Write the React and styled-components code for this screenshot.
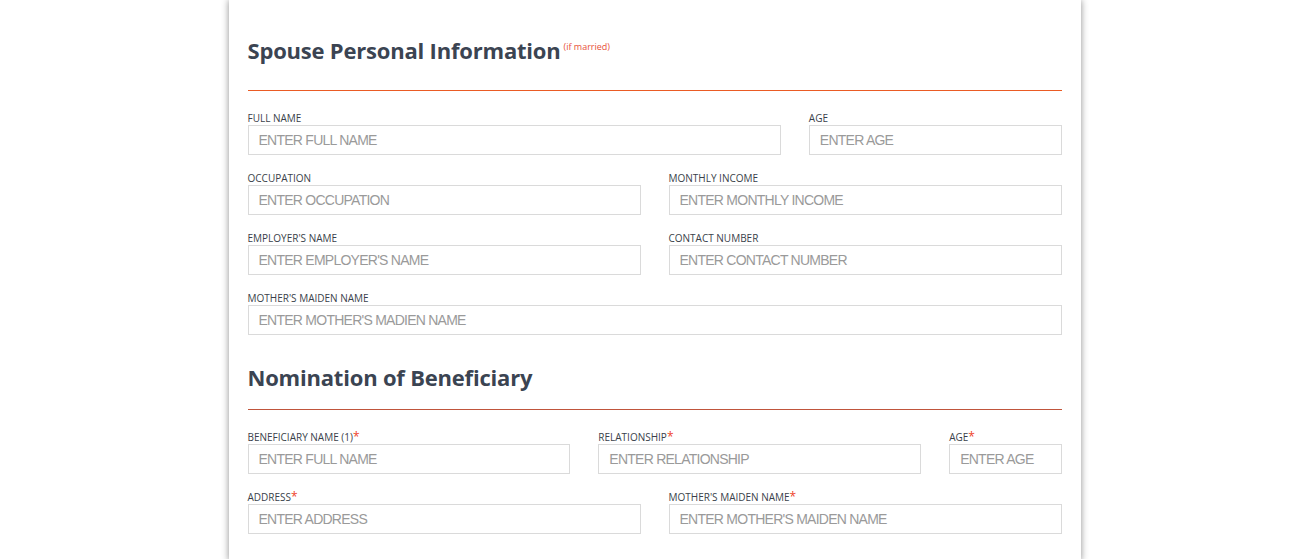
import React from 'react';
import styled, { createGlobalStyle } from 'styled-components';

const GlobalStyle = createGlobalStyle`
  html, body {
    margin: 0;
    padding: 0;
    background: #ffffff;
  }
  * {
    box-sizing: border-box;
  }
`;

const Page = styled.div`
  display: flex;
  justify-content: center;
  padding-right: 6px;
  min-height: 100vh;
  overflow: hidden;
`;

const Card = styled.div`
  width: 852px;
  min-height: 100vh;
  background: #ffffff;
  box-shadow: 0 0 7px rgba(0, 0, 0, 0.45);
  padding: 35px 19px 0 19px;
`;

const Section = styled.section`
  margin-bottom: 27px;
`;

const Header = styled.div`
  display: flex;
  align-items: flex-start;
  gap: 3px;
  padding-bottom: ${(p) => p.$pad}px;
  border-bottom: 1px solid ${(p) => p.$line};
`;

const Title = styled.h2`
  margin: 0;
  font-family: 'Open Sans', sans-serif;
  font-size: 22px;
  font-weight: 700;
  letter-spacing: -0.2px;
  line-height: 30px;
  color: #3b4452;
`;

const Note = styled.span`
  margin-top: 6px;
  font-family: 'Open Sans', sans-serif;
  font-size: 9px;
  line-height: 12px;
  color: #e8503a;
`;

const Grid = styled.div`
  display: grid;
  grid-template-columns: repeat(12, 1fr);
  column-gap: 28px;
  row-gap: 17px;
  padding-top: 21px;
`;

const Field = styled.div`
  grid-column: span ${(p) => p.$span};
  display: flex;
  flex-direction: column;
`;

const Label = styled.label`
  font-family: 'Open Sans', sans-serif;
  font-size: 10px;
  line-height: 13px;
  height: 13px;
  text-transform: uppercase;
  color: #3a3f4a;
  white-space: nowrap;
`;

const Req = styled.span`
  color: #ee3f2a;
  font-size: 12px;
  line-height: 10px;
`;

const Input = styled.input`
  height: 30px;
  width: 100%;
  border: 1px solid #dadada;
  border-radius: 0;
  padding: 0 10px;
  font-family: 'Liberation Sans', Arial, sans-serif;
  font-size: 14px;
  letter-spacing: -0.75px;
  color: #333;
  outline: none;
  background: #fff;

  &::placeholder {
    color: #9a9a9a;
  }
`;

const spouse = [
  { label: 'Full Name', ph: 'ENTER FULL NAME', span: 8 },
  { label: 'Age', ph: 'ENTER AGE', span: 4 },
  { label: 'Occupation', ph: 'ENTER OCCUPATION', span: 6 },
  { label: 'Monthly Income', ph: 'ENTER MONTHLY INCOME', span: 6 },
  { label: "Employer's Name", ph: "ENTER EMPLOYER'S NAME", span: 6 },
  { label: 'Contact Number', ph: 'ENTER CONTACT NUMBER', span: 6 },
  { label: "Mother's Maiden Name", ph: "ENTER MOTHER'S MADIEN NAME", span: 12 },
];

const beneficiary = [
  { label: 'Beneficiary Name (1)', ph: 'ENTER FULL NAME', span: 5, req: true },
  { label: 'Relationship', ph: 'ENTER RELATIONSHIP', span: 5, req: true },
  { label: 'Age', ph: 'ENTER AGE', span: 2, req: true },
  { label: 'Address', ph: 'ENTER ADDRESS', span: 6, req: true },
  { label: "Mother's Maiden Name", ph: "ENTER MOTHER'S MAIDEN NAME", span: 6, req: true },
];

const Fields = ({ items }) => (
  <Grid>
    {items.map((f, i) => (
      <Field key={i} $span={f.span}>
        <Label>
          {f.label}
          {f.req && <Req>*</Req>}
        </Label>
        <Input placeholder={f.ph} />
      </Field>
    ))}
  </Grid>
);

const App = () => {
  return (
    <Page>
      <GlobalStyle />
      <Card>
        <Section>
          <Header $pad={25} $line="#ea5b24">
            <Title>Spouse Personal Information</Title>
            <Note>(if married)</Note>
          </Header>
          <Fields items={spouse} />
        </Section>
        <Section>
          <Header $pad={17} $line="#c0553c">
            <Title>Nomination of Beneficiary</Title>
          </Header>
          <Fields items={beneficiary} />
        </Section>
      </Card>
    </Page>
  );
};

export default App;
